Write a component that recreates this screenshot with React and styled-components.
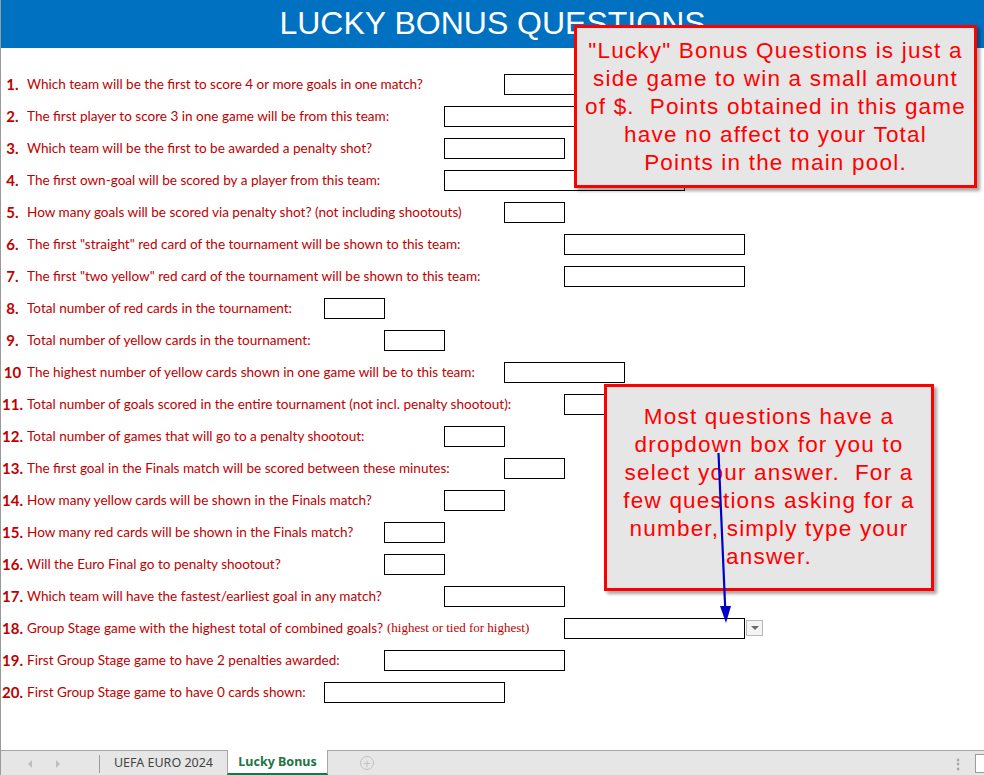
import React from "react";
import styled, { createGlobalStyle } from "styled-components";

const GlobalStyle = createGlobalStyle`
  html, body {
    margin: 0;
    padding: 0;
    background: #ffffff;
  }
  #root {
    width: 984px;
    height: 775px;
    overflow: hidden;
  }
`;

const Page = styled.div`
  position: relative;
  width: 984px;
  height: 775px;
  display: flex;
  flex-direction: column;
  box-sizing: border-box;
  border-left: 1px solid #9a9a9a;
  overflow: hidden;
`;

const Header = styled.div`
  height: 48px;
  background: #0070c0;
  color: #ffffff;
  font-family: "Liberation Sans", Arial, sans-serif;
  font-size: 32px;
  display: flex;
  align-items: center;
  justify-content: center;
  padding-bottom: 2px;
  box-sizing: border-box;
`;

const Sheet = styled.div`
  flex: 1;
  padding-top: 20px;
  display: flex;
  flex-direction: column;
`;

const Row = styled.div`
  height: 32px;
  display: flex;
  align-items: center;
`;

const Label = styled.div`
  width: ${(p) => p.$at}px;
  flex-shrink: 0;
  display: flex;
  align-items: center;
  white-space: nowrap;
`;

const Num = styled.span`
  width: 21px;
  margin-left: 1px;
  text-align: center;
  font-family: Lato, "Noto Sans", sans-serif;
  font-weight: 700;
  font-size: 15px;
  color: #c00000;
`;

const Question = styled.span`
  margin-left: 4px;
  font-family: Lato, "Noto Sans", sans-serif;
  font-size: 13.55px;
  color: #c00000;
`;

const Note = styled.span`
  margin-left: 4px;
  font-family: "Liberation Serif", "DejaVu Serif", serif;
  font-size: 13px;
  color: #c00000;
`;

const Cell = styled.div`
  width: ${(p) => p.$w}px;
  height: 21px;
  box-sizing: border-box;
  border: 1px solid #000000;
  background: #ffffff;
`;

const DropButton = styled.div`
  width: 17px;
  height: 16px;
  margin-left: 1px;
  box-sizing: border-box;
  border: 1px solid #b8b8b8;
  background: #f4f4f4;
  display: flex;
  align-items: center;
  justify-content: center;
  &::after {
    content: "";
    border-left: 4px solid transparent;
    border-right: 4px solid transparent;
    border-top: 4px solid #6b6b6b;
  }
`;

const Callout = styled.div`
  position: absolute;
  left: ${(p) => p.$x}px;
  top: ${(p) => p.$y}px;
  width: ${(p) => p.$w}px;
  height: ${(p) => p.$h}px;
  box-sizing: border-box;
  border: 3px solid #ff0000;
  background: #e6e6e6;
  box-shadow: 3px 3px 3px rgba(0, 0, 0, 0.35);
  color: #ff0000;
  font-family: "Liberation Sans", Arial, sans-serif;
  font-size: 22.5px;
  letter-spacing: 1.2px;
  line-height: 28px;
  text-align: center;
  padding-top: ${(p) => p.$pt}px;
  white-space: pre;
`;

const ArrowLayer = styled.svg`
  position: absolute;
  left: 0;
  top: 0;
  pointer-events: none;
`;

const TabBar = styled.div`
  height: 25px;
  box-sizing: border-box;
  border-top: 1px solid #a6a6a6;
  background: #e6e6e6;
  display: flex;
  align-items: stretch;
  font-family: "Noto Sans", "Open Sans", sans-serif;
  font-size: 12.5px;
`;

const NavArrows = styled.div`
  width: 99px;
  display: flex;
  align-items: center;
  gap: 20px;
  padding-left: 25px;
  box-sizing: border-box;
  border-right: 1px solid #9b9b9b;
  margin: 4px 0 2px;
`;

const Tri = styled.span`
  width: 0;
  height: 0;
  border-top: 4px solid transparent;
  border-bottom: 4px solid transparent;
  ${(p) =>
    p.$dir === "left"
      ? "border-right: 4px solid #bdbdbd;"
      : "border-left: 4px solid #bdbdbd;"}
  margin: 0 2px;
`;

const Tab = styled.div`
  width: ${(p) => p.$w}px;
  display: flex;
  align-items: center;
  justify-content: center;
  box-sizing: border-box;
  color: ${(p) => (p.$active ? "#217346" : "#444444")};
  font-weight: ${(p) => (p.$active ? 700 : 400)};
  background: ${(p) => (p.$active ? "#ffffff" : "transparent")};
  border-bottom: ${(p) => (p.$active ? "2px solid #217346" : "none")};
  border-left: ${(p) => (p.$active ? "1px solid #a6a6a6" : "none")};
  border-right: ${(p) => (p.$active ? "1px solid #a6a6a6" : "none")};
  margin-top: ${(p) => (p.$active ? "-1px" : "0")};
  padding-bottom: 1px;
`;

const AddSheet = styled.div`
  margin-left: 32px;
  align-self: center;
  width: 14px;
  height: 14px;
  box-sizing: border-box;
  border: 1px solid #c2c2c2;
  border-radius: 50%;
  color: #c2c2c2;
  display: flex;
  align-items: center;
  justify-content: center;
  font-size: 13px;
  line-height: 1;
`;

const Spacer = styled.div`
  flex: 1;
`;

const Dots = styled.div`
  align-self: center;
  color: #a0a0a0;
  font-size: 14px;
  font-weight: 700;
  margin-right: 10px;
`;

const ScrollStub = styled.div`
  width: 8px;
  margin: 3px 0 2px;
  border: 1px solid #9b9b9b;
  border-right: none;
  background: #ffffff;
`;

const questions = [
  { n: "1.", text: "Which team will be the first to score 4 or more goals in one match?", at: 504, w: 120 },
  { n: "2.", text: "The first player to score 3 in one game will be from this team:", at: 444, w: 180 },
  { n: "3.", text: "Which team will be the first to be awarded a penalty shot?", at: 444, w: 121 },
  { n: "4.", text: "The first own-goal will be scored by a player from this team:", at: 444, w: 241 },
  { n: "5.", text: "How many goals will be scored via penalty shot? (not including shootouts)", at: 504, w: 61 },
  { n: "6.", text: 'The first "straight" red card of the tournament will be shown to this team:', at: 564, w: 181 },
  { n: "7.", text: 'The first "two yellow" red card of the tournament will be shown to this team:', at: 564, w: 181 },
  { n: "8.", text: "Total number of red cards in the tournament:", at: 324, w: 61 },
  { n: "9.", text: "Total number of yellow cards in the tournament:", at: 384, w: 61 },
  { n: "10", text: "The highest number of yellow cards shown in one game will be to this team:", at: 504, w: 121 },
  { n: "11.", text: "Total number of goals scored in the entire tournament (not incl. penalty shootout):", at: 564, w: 61 },
  { n: "12.", text: "Total number of games that will go to a penalty shootout:", at: 444, w: 61 },
  { n: "13.", text: "The first goal in the Finals match will be scored between these minutes:", at: 504, w: 61 },
  { n: "14.", text: "How many yellow cards will be shown in the Finals match?", at: 444, w: 61 },
  { n: "15.", text: "How many red cards will be shown in the Finals match?", at: 384, w: 61 },
  { n: "16.", text: "Will the Euro Final go to penalty shootout?", at: 384, w: 61 },
  { n: "17.", text: "Which team will have the fastest/earliest goal in any match?", at: 444, w: 121 },
  { n: "18.", text: "Group Stage game with the highest total of combined goals?", note: "(highest or tied for highest)", at: 564, w: 181, dropdown: true },
  { n: "19.", text: "First Group Stage game to have 2 penalties awarded:", at: 384, w: 181 },
  { n: "20.", text: "First Group Stage game to have 0 cards shown:", at: 324, w: 181 },
];

const introText =
  '"Lucky" Bonus Questions is just a\nside game to win a small amount\nof $.  Points obtained in this game\nhave no affect to your Total\nPoints in the main pool.';

const helpText =
  "Most questions have a\ndropdown box for you to\nselect your answer.  For a\nfew questions asking for a\nnumber, simply type your\nanswer.";

export default function App() {
  return (
    <Page>
      <GlobalStyle />
      <Header>LUCKY BONUS QUESTIONS</Header>
      <Sheet>
        {questions.map((q) => (
          <Row key={q.n}>
            <Label $at={q.at - 1}>
              <Num>{q.n}</Num>
              <Question>{q.text}</Question>
              {q.note && <Note>{q.note}</Note>}
            </Label>
            <Cell $w={q.w} />
            {q.dropdown && <DropButton />}
          </Row>
        ))}
      </Sheet>
      <TabBar>
        <NavArrows>
          <Tri $dir="left" />
          <Tri $dir="right" />
        </NavArrows>
        <Tab $w={127}>UEFA EURO 2024</Tab>
        <Tab $w={101} $active>
          Lucky Bonus
        </Tab>
        <AddSheet>+</AddSheet>
        <Spacer />
        <Dots>⋮</Dots>
        <ScrollStub />
      </TabBar>

      <Callout $x={573} $y={25} $w={403} $h={163} $pt={9}>
        {introText}
      </Callout>
      <Callout $x={603} $y={384} $w={330} $h={207} $pt={16}>
        {helpText}
      </Callout>
      <ArrowLayer width="984" height="775">
        <line x1="717.5" y1="453" x2="724.2" y2="608" stroke="#0000c8" strokeWidth="2.2" />
        <polygon points="719,606 730,606 725,623" fill="#0000c8" />
      </ArrowLayer>
    </Page>
  );
}
